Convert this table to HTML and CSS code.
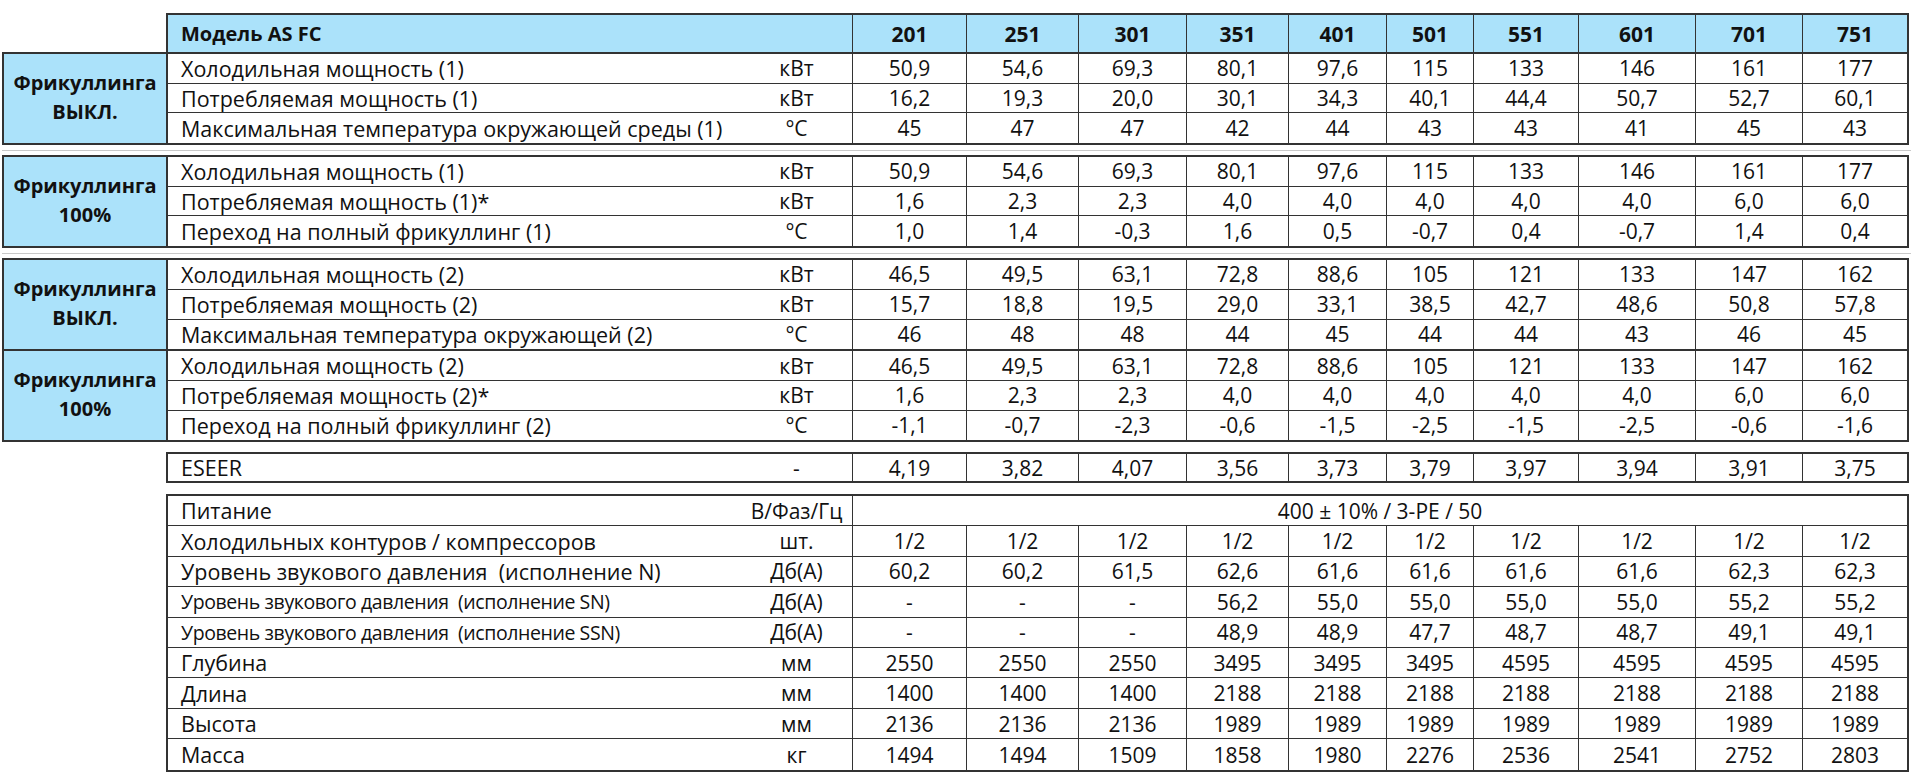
FILE: index.html
```html
<!DOCTYPE html>
<html lang="ru">
<head>
<meta charset="utf-8">
<title>Модель AS FC</title>
<link rel="stylesheet" href="styles.css">
</head>
<body>
<div class="sheet">

  <div class="block">
    <div class="spacer"></div>
    <div class="tbl head">
      <div class="row hrow">
        <div class="lbl model">Модель AS FC</div>
        <div class="v">201</div><div class="v">251</div><div class="v">301</div><div class="v">351</div><div class="v">401</div><div class="v">501</div><div class="v">551</div><div class="v">601</div><div class="v">701</div><div class="v">751</div>
      </div>
    </div>
  </div>

  <div class="block">
    <div class="side">Фрикуллинга<br>ВЫКЛ.</div>
    <div class="tbl">
      <div class="row"><div class="lbl">Холодильная мощность (1)</div><div class="u">кВт</div><div class="v">50,9</div><div class="v">54,6</div><div class="v">69,3</div><div class="v">80,1</div><div class="v">97,6</div><div class="v">115</div><div class="v">133</div><div class="v">146</div><div class="v">161</div><div class="v">177</div></div>
      <div class="row"><div class="lbl">Потребляемая мощность (1)</div><div class="u">кВт</div><div class="v">16,2</div><div class="v">19,3</div><div class="v">20,0</div><div class="v">30,1</div><div class="v">34,3</div><div class="v">40,1</div><div class="v">44,4</div><div class="v">50,7</div><div class="v">52,7</div><div class="v">60,1</div></div>
      <div class="row"><div class="lbl">Максимальная температура окружающей среды (1)</div><div class="u">°C</div><div class="v">45</div><div class="v">47</div><div class="v">47</div><div class="v">42</div><div class="v">44</div><div class="v">43</div><div class="v">43</div><div class="v">41</div><div class="v">45</div><div class="v">43</div></div>
    </div>
  </div>

  <div class="gap line"></div>

  <div class="block">
    <div class="side">Фрикуллинга<br>100%</div>
    <div class="tbl">
      <div class="row"><div class="lbl">Холодильная мощность (1)</div><div class="u">кВт</div><div class="v">50,9</div><div class="v">54,6</div><div class="v">69,3</div><div class="v">80,1</div><div class="v">97,6</div><div class="v">115</div><div class="v">133</div><div class="v">146</div><div class="v">161</div><div class="v">177</div></div>
      <div class="row"><div class="lbl">Потребляемая мощность (1)*</div><div class="u">кВт</div><div class="v">1,6</div><div class="v">2,3</div><div class="v">2,3</div><div class="v">4,0</div><div class="v">4,0</div><div class="v">4,0</div><div class="v">4,0</div><div class="v">4,0</div><div class="v">6,0</div><div class="v">6,0</div></div>
      <div class="row"><div class="lbl">Переход на полный фрикуллинг (1)</div><div class="u">°C</div><div class="v">1,0</div><div class="v">1,4</div><div class="v">-0,3</div><div class="v">1,6</div><div class="v">0,5</div><div class="v">-0,7</div><div class="v">0,4</div><div class="v">-0,7</div><div class="v">1,4</div><div class="v">0,4</div></div>
    </div>
  </div>

  <div class="gap line"></div>

  <div class="block">
    <div class="side">Фрикуллинга<br>ВЫКЛ.</div>
    <div class="tbl">
      <div class="row"><div class="lbl">Холодильная мощность (2)</div><div class="u">кВт</div><div class="v">46,5</div><div class="v">49,5</div><div class="v">63,1</div><div class="v">72,8</div><div class="v">88,6</div><div class="v">105</div><div class="v">121</div><div class="v">133</div><div class="v">147</div><div class="v">162</div></div>
      <div class="row"><div class="lbl">Потребляемая мощность (2)</div><div class="u">кВт</div><div class="v">15,7</div><div class="v">18,8</div><div class="v">19,5</div><div class="v">29,0</div><div class="v">33,1</div><div class="v">38,5</div><div class="v">42,7</div><div class="v">48,6</div><div class="v">50,8</div><div class="v">57,8</div></div>
      <div class="row"><div class="lbl">Максимальная температура окружающей (2)</div><div class="u">°C</div><div class="v">46</div><div class="v">48</div><div class="v">48</div><div class="v">44</div><div class="v">45</div><div class="v">44</div><div class="v">44</div><div class="v">43</div><div class="v">46</div><div class="v">45</div></div>
    </div>
  </div>

  <div class="block attached">
    <div class="side">Фрикуллинга<br>100%</div>
    <div class="tbl">
      <div class="row"><div class="lbl">Холодильная мощность (2)</div><div class="u">кВт</div><div class="v">46,5</div><div class="v">49,5</div><div class="v">63,1</div><div class="v">72,8</div><div class="v">88,6</div><div class="v">105</div><div class="v">121</div><div class="v">133</div><div class="v">147</div><div class="v">162</div></div>
      <div class="row"><div class="lbl">Потребляемая мощность (2)*</div><div class="u">кВт</div><div class="v">1,6</div><div class="v">2,3</div><div class="v">2,3</div><div class="v">4,0</div><div class="v">4,0</div><div class="v">4,0</div><div class="v">4,0</div><div class="v">4,0</div><div class="v">6,0</div><div class="v">6,0</div></div>
      <div class="row"><div class="lbl">Переход на полный фрикуллинг (2)</div><div class="u">°C</div><div class="v">-1,1</div><div class="v">-0,7</div><div class="v">-2,3</div><div class="v">-0,6</div><div class="v">-1,5</div><div class="v">-2,5</div><div class="v">-1,5</div><div class="v">-2,5</div><div class="v">-0,6</div><div class="v">-1,6</div></div>
    </div>
  </div>

  <div class="gap"></div>

  <div class="block">
    <div class="spacer"></div>
    <div class="tbl">
      <div class="row single"><div class="lbl">ESEER</div><div class="u">-</div><div class="v">4,19</div><div class="v">3,82</div><div class="v">4,07</div><div class="v">3,56</div><div class="v">3,73</div><div class="v">3,79</div><div class="v">3,97</div><div class="v">3,94</div><div class="v">3,91</div><div class="v">3,75</div></div>
    </div>
  </div>

  <div class="gap wide"></div>

  <div class="block">
    <div class="spacer"></div>
    <div class="tbl specs">
      <div class="row"><div class="lbl">Питание</div><div class="u">В/Фаз/Гц</div><div class="v span">400 ± 10% / 3-PE / 50</div></div>
      <div class="row"><div class="lbl">Холодильных контуров / компрессоров</div><div class="u">шт.</div><div class="v">1/2</div><div class="v">1/2</div><div class="v">1/2</div><div class="v">1/2</div><div class="v">1/2</div><div class="v">1/2</div><div class="v">1/2</div><div class="v">1/2</div><div class="v">1/2</div><div class="v">1/2</div></div>
      <div class="row"><div class="lbl">Уровень звукового давления&nbsp; (исполнение N)</div><div class="u">Дб(А)</div><div class="v">60,2</div><div class="v">60,2</div><div class="v">61,5</div><div class="v">62,6</div><div class="v">61,6</div><div class="v">61,6</div><div class="v">61,6</div><div class="v">61,6</div><div class="v">62,3</div><div class="v">62,3</div></div>
      <div class="row"><div class="lbl narrow">Уровень звукового давления&nbsp; (исполнение SN)</div><div class="u">Дб(А)</div><div class="v">-</div><div class="v">-</div><div class="v">-</div><div class="v">56,2</div><div class="v">55,0</div><div class="v">55,0</div><div class="v">55,0</div><div class="v">55,0</div><div class="v">55,2</div><div class="v">55,2</div></div>
      <div class="row"><div class="lbl narrow">Уровень звукового давления&nbsp; (исполнение SSN)</div><div class="u">Дб(А)</div><div class="v">-</div><div class="v">-</div><div class="v">-</div><div class="v">48,9</div><div class="v">48,9</div><div class="v">47,7</div><div class="v">48,7</div><div class="v">48,7</div><div class="v">49,1</div><div class="v">49,1</div></div>
      <div class="row"><div class="lbl">Глубина</div><div class="u">мм</div><div class="v">2550</div><div class="v">2550</div><div class="v">2550</div><div class="v">3495</div><div class="v">3495</div><div class="v">3495</div><div class="v">4595</div><div class="v">4595</div><div class="v">4595</div><div class="v">4595</div></div>
      <div class="row"><div class="lbl">Длина</div><div class="u">мм</div><div class="v">1400</div><div class="v">1400</div><div class="v">1400</div><div class="v">2188</div><div class="v">2188</div><div class="v">2188</div><div class="v">2188</div><div class="v">2188</div><div class="v">2188</div><div class="v">2188</div></div>
      <div class="row"><div class="lbl">Высота</div><div class="u">мм</div><div class="v">2136</div><div class="v">2136</div><div class="v">2136</div><div class="v">1989</div><div class="v">1989</div><div class="v">1989</div><div class="v">1989</div><div class="v">1989</div><div class="v">1989</div><div class="v">1989</div></div>
      <div class="row"><div class="lbl">Масса</div><div class="u">кг</div><div class="v">1494</div><div class="v">1494</div><div class="v">1509</div><div class="v">1858</div><div class="v">1980</div><div class="v">2276</div><div class="v">2536</div><div class="v">2541</div><div class="v">2752</div><div class="v">2803</div></div>
    </div>
  </div>

</div>
</body>
</html>
```

FILE: styles.css
```css
* { box-sizing: border-box; }

body {
  margin: 0;
  background: #ffffff;
  color: #111111;
  font-family: "Open Sans", "Noto Sans", "DejaVu Sans", sans-serif;
  font-size: 21px;
}

.sheet {
  padding: 13px 0 0 2px;
  width: 1911px;
}

.block {
  display: flex;
}

.spacer {
  width: 164px;
  flex: none;
}

.side {
  width: 164px;
  flex: none;
  background: #abe2fa;
  border: 2px solid #333333;
  border-right: 0;
  display: flex;
  align-items: center;
  justify-content: center;
  text-align: center;
  font-size: 20px;
  font-weight: 700;
  line-height: 29px;
  padding-bottom: 4px;
}

.tbl {
  width: 1743px;
  flex: none;
  border: 2px solid #333333;
}

.tbl.head {
  background: #abe2fa;
  border-bottom: 0;
}

.attached .side,
.attached .tbl {
  border-top: 0;
}

.row {
  display: grid;
  grid-template-columns: 577px 107px 114px 112px 108px 102px 98px 87px 105px 117px 107px 105px;
  height: 29.7px;
  border-bottom: 1px solid #333333;
}

.row:last-child {
  border-bottom: 0;
}

.row.hrow {
  height: 37px;
  grid-template-columns: 684px 114px 112px 108px 102px 98px 87px 105px 117px 107px 105px;
  font-weight: 700;
}

.row.single {
  height: 27px;
}

.specs .row {
  height: 30.44px;
}

.lbl,
.u,
.v {
  display: flex;
  align-items: center;
  white-space: nowrap;
  overflow: hidden;
}

.lbl {
  padding-left: 13px;
  font-size: 21.5px;
}

.lbl.model {
  font-size: 20px;
}

.lbl.narrow {
  font-size: 19.5px;
  letter-spacing: -0.4px;
}

.u {
  justify-content: center;
  padding-right: 4px;
}

.v {
  justify-content: center;
  border-left: 1px solid #333333;
}

.v.span {
  grid-column: 3 / -1;
}

.gap {
  height: 10px;
  display: flex;
  align-items: center;
}

.gap.wide {
  height: 10.6px;
}

.gap.line::before {
  content: "";
  display: block;
  width: 100%;
  height: 1px;
  background: #c9c9c9;
}
```
